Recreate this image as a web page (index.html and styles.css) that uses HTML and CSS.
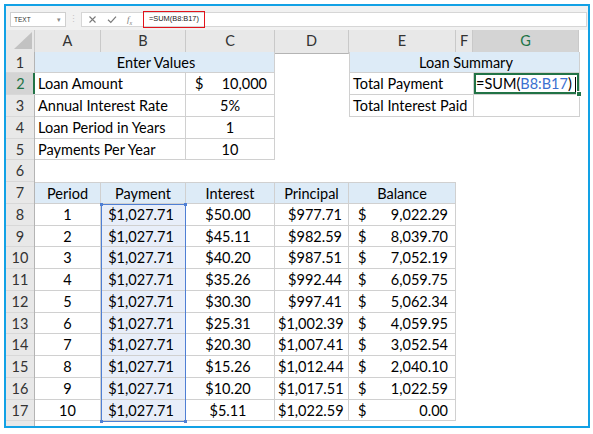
FILE: index.html
```html
<!DOCTYPE html>
<html lang="en">
<head>
    <meta charset="UTF-8">
    <title>Loan Schedule</title>
    <link rel="stylesheet" href="styles.css">
</head>
<body>
    <div class="frame">
        <div class="formula-bar">
            <div class="name-box"><span>TEXT</span><span class="drop">&#9662;</span></div>
            <div class="grip">&#8942;</div>
            <div class="fx-area">
                <div class="fx-buttons">
                    <svg width="9" height="9" viewBox="0 0 9 9"><path d="M1.5 1.5 L7.5 7.5 M7.5 1.5 L1.5 7.5" stroke="#7a7a7a" stroke-width="1.1" fill="none"/></svg>
                    <svg width="10" height="9" viewBox="0 0 10 9"><path d="M1 4.8 L3.8 7.4 L9 1.6" stroke="#7a7a7a" stroke-width="1.2" fill="none"/></svg>
                    <span class="fx">f<sub>x</sub></span>
                </div>
                <div class="formula-text">=SUM(B8:B17)</div>
            </div>
        </div>

        <div class="sheet">
            <div class="col-heads">
                <div class="corner">
                    <svg width="28" height="21" viewBox="0 0 28 21"><polygon points="8,19 26,19 26,2" fill="#c2c2c2"/></svg>
                </div>
                <div class="ch">A</div>
                <div class="ch">B</div>
                <div class="ch">C</div>
                <div class="ch">D</div>
                <div class="ch">E</div>
                <div class="ch">F</div>
                <div class="ch sel">G</div>
                <div class="ch rest"></div>
            </div>

            <div class="row-heads">
                <div class="rh">1</div>
                <div class="rh sel">2</div>
                <div class="rh">3</div>
                <div class="rh">4</div>
                <div class="rh">5</div>
                <div class="rh">6</div>
                <div class="rh">7</div>
                <div class="rh">8</div>
                <div class="rh">9</div>
                <div class="rh">10</div>
                <div class="rh">11</div>
                <div class="rh">12</div>
                <div class="rh">13</div>
                <div class="rh">14</div>
                <div class="rh">15</div>
                <div class="rh">16</div>
                <div class="rh">17</div>
                <div class="rh"></div>
            </div>

            <!-- A1:C5 -->
            <div class="block inputs">
                <div class="cell title span2">Enter Values</div>
                <div class="cell">Loan Amount</div>
                <div class="cell acct"><span>$</span><span>10,000</span></div>
                <div class="cell">Annual Interest Rate</div>
                <div class="cell c">5%</div>
                <div class="cell">Loan Period in Years</div>
                <div class="cell c">1</div>
                <div class="cell">Payments Per Year</div>
                <div class="cell c">10</div>
            </div>

            <!-- E1:G3 -->
            <div class="block summary">
                <div class="cell title span2">Loan Summary</div>
                <div class="cell">Total Payment</div>
                <div class="cell active">=SUM(<span class="ref">B8:B17</span>)<span class="caret"></span></div>
                <div class="cell">Total Interest Paid</div>
                <div class="cell"></div>
            </div>

            <!-- A7:E17 -->
            <div class="block schedule">
                <div class="cell title c">Period</div>
                <div class="cell title c">Payment</div>
                <div class="cell title c">Interest</div>
                <div class="cell title c">Principal</div>
                <div class="cell title c">Balance</div>

                <div class="cell c">1</div><div class="cell pay">$1,027.71</div><div class="cell int">$50.00</div><div class="cell r">$977.71</div><div class="cell acct"><span>$</span><span>9,022.29</span></div>
                <div class="cell c">2</div><div class="cell pay">$1,027.71</div><div class="cell int">$45.11</div><div class="cell r">$982.59</div><div class="cell acct"><span>$</span><span>8,039.70</span></div>
                <div class="cell c">3</div><div class="cell pay">$1,027.71</div><div class="cell int">$40.20</div><div class="cell r">$987.51</div><div class="cell acct"><span>$</span><span>7,052.19</span></div>
                <div class="cell c">4</div><div class="cell pay">$1,027.71</div><div class="cell int">$35.26</div><div class="cell r">$992.44</div><div class="cell acct"><span>$</span><span>6,059.75</span></div>
                <div class="cell c">5</div><div class="cell pay">$1,027.71</div><div class="cell int">$30.30</div><div class="cell r">$997.41</div><div class="cell acct"><span>$</span><span>5,062.34</span></div>
                <div class="cell c">6</div><div class="cell pay">$1,027.71</div><div class="cell int">$25.31</div><div class="cell r">$1,002.39</div><div class="cell acct"><span>$</span><span>4,059.95</span></div>
                <div class="cell c">7</div><div class="cell pay">$1,027.71</div><div class="cell int">$20.30</div><div class="cell r">$1,007.41</div><div class="cell acct"><span>$</span><span>3,052.54</span></div>
                <div class="cell c">8</div><div class="cell pay">$1,027.71</div><div class="cell int">$15.26</div><div class="cell r">$1,012.44</div><div class="cell acct"><span>$</span><span>2,040.10</span></div>
                <div class="cell c">9</div><div class="cell pay">$1,027.71</div><div class="cell int">$10.20</div><div class="cell r">$1,017.51</div><div class="cell acct"><span>$</span><span>1,022.59</span></div>
                <div class="cell c">10</div><div class="cell pay">$1,027.71</div><div class="cell int">$5.11</div><div class="cell r">$1,022.59</div><div class="cell acct"><span>$</span><span>0.00</span></div>

                <div class="range">
                    <i class="knob tl"></i><i class="knob tr"></i><i class="knob bl"></i><i class="knob br"></i>
                </div>
            </div>
        </div>
    </div>
</body>
</html>
```

FILE: styles.css
```css
:root {
    --cols: 29px 66px 85px 89px 74px 107px 17px 106px 1fr;
    --row: 21.75px;
    --grid: #d0d0d0;
    --green: #217346;
}

body {
    margin: 0;
    padding: 4px;
    background-color: #fff;
    font-family: Lato, "Noto Sans", sans-serif;
    color: #000;
}

.frame {
    width: 586px;
    height: 424px;
    box-sizing: border-box;
    border: 2px solid #12a1e5;
    display: flex;
    flex-direction: column;
    overflow: hidden;
}

/* formula bar */
.formula-bar {
    display: flex;
    align-items: flex-start;
    height: 24px;
    box-sizing: border-box;
    padding: 6px 1px 0 4px;
    background-color: #f1f1f1;
    font-family: "Liberation Sans", Arial, sans-serif;
}

.name-box {
    display: flex;
    align-items: center;
    justify-content: space-between;
    width: 56px;
    height: 15px;
    box-sizing: border-box;
    padding: 0 4px 0 3px;
    background-color: #fff;
    border: 1px solid #cfcfcf;
    font-size: 6.5px;
    color: #333;
}

    .name-box .drop {
        font-size: 7px;
        color: #888;
    }

.grip {
    width: 15px;
    text-align: center;
    font-size: 9px;
    line-height: 15px;
    color: #c4c4c4;
}

.fx-area {
    flex: 1;
    display: flex;
    height: 15px;
    box-sizing: border-box;
    background-color: #fff;
    border: 1px solid #d6d6d6;
}

.fx-buttons {
    display: flex;
    align-items: center;
    gap: 10px;
    width: 61px;
    padding-left: 6px;
    box-sizing: border-box;
}

.fx {
    font-family: "Liberation Serif", serif;
    font-style: italic;
    font-size: 9px;
    color: #7a7a7a;
}

    .fx sub {
        font-size: 6px;
    }

.formula-text {
    width: 62px;
    height: 17px;
    margin-top: -2px;
    box-sizing: border-box;
    border: 1.5px solid #e3131b;
    padding-left: 5px;
    font-size: 7.4px;
    line-height: 14px;
    color: #222;
}

/* sheet */
.sheet {
    flex: 1;
    display: grid;
    grid-template-columns: var(--cols);
    grid-template-rows: 21.5px repeat(17, var(--row)) 1fr;
    font-size: 14.5px;
}

.col-heads {
    grid-column: 1 / -1;
    grid-row: 1;
    display: grid;
    grid-template-columns: var(--cols);
}

.corner,
.ch {
    box-sizing: border-box;
    background-color: #e8e8e8;
    border-right: 1px solid #c9c9c9;
    border-bottom: 1px solid #b4b4b4;
}

.ch {
    text-align: center;
    line-height: 22px;
    color: #333;
}

    .ch.sel {
        background-color: #d4d4d4;
        color: var(--green);
        border-bottom: 2px solid var(--green);
    }

    .ch.rest {
        background-color: #fff;
        border: none;
    }

.corner svg {
    display: block;
}

.row-heads {
    grid-column: 1;
    grid-row: 2 / -1;
    display: grid;
    grid-template-rows: repeat(17, var(--row)) 1fr;
    background-color: #e8e8e8;
    border-right: 1px solid #b4b4b4;
}

.rh {
    text-align: center;
    line-height: 22px;
    overflow: hidden;
    color: #333;
    border-bottom: 1px solid #d8d8d8;
}

    .rh.sel {
        background-color: #d4d4d4;
        color: var(--green);
        box-shadow: inset -2px 0 0 var(--green);
        margin-right: -1px;
    }

    .rh:last-child {
        border-bottom: none;
    }

/* cell blocks */
.block {
    display: grid;
}

.inputs {
    grid-column: 2 / 5;
    grid-row: 2 / 7;
    grid-template-columns: 151px 89px;
    grid-template-rows: repeat(5, var(--row));
}

.summary {
    grid-column: 6 / 9;
    grid-row: 2 / 5;
    grid-template-columns: 124px 106px;
    grid-template-rows: repeat(3, var(--row));
    border-left: 1px solid var(--grid);
}

.schedule {
    grid-column: 2 / 7;
    grid-row: 8 / 19;
    grid-template-columns: 66px 85px 89px 74px 107px;
    grid-template-rows: repeat(11, var(--row));
    position: relative;
}

    .schedule .cell:nth-child(-n+5) {
        border-top: 1px solid var(--grid);
        line-height: 21.5px;
    }

.cell {
    box-sizing: border-box;
    border-right: 1px solid var(--grid);
    border-bottom: 1px solid var(--grid);
    padding-left: 3px;
    line-height: 22.5px;
    white-space: nowrap;
    overflow: hidden;
}

.span2 {
    grid-column: span 2;
}

.title {
    background-color: #ddebf7;
    text-align: center;
}

.c {
    text-align: center;
    padding-left: 0;
}

.r {
    text-align: right;
    padding-right: 6px;
}

.pay,
.int {
    text-align: center;
    padding: 0 4px 0 0;
}

.pay {
    background-color: #e8eef9;
}

.acct {
    display: flex;
    justify-content: space-between;
    padding: 0 7px 0 9px;
}

.active {
    position: relative;
    overflow: visible;
    padding-left: 2px;
    box-shadow: inset 0 0 0 2px var(--green);
}

    .active::after {
        content: "";
        position: absolute;
        right: -3px;
        bottom: -3px;
        width: 4px;
        height: 4px;
        background-color: var(--green);
        border: 1px solid #fff;
    }

.ref {
    color: #3b6fd0;
}

.caret {
    display: inline-block;
    width: 1px;
    height: 15px;
    margin-left: 3px;
    vertical-align: -3px;
    background-color: #000;
}

/* B8:B17 reference highlight */
.range {
    position: absolute;
    left: 66px;
    top: var(--row);
    width: 85px;
    bottom: -1px;
    box-sizing: border-box;
    border: 1px solid #4f7fd4;
}

.knob {
    position: absolute;
    width: 3px;
    height: 3px;
    background-color: #4f7fd4;
}

    .knob.tl { left: -2px; top: -2px; }
    .knob.tr { right: -2px; top: -2px; }
    .knob.bl { left: -2px; bottom: -2px; }
    .knob.br { right: -2px; bottom: -2px; }
```
